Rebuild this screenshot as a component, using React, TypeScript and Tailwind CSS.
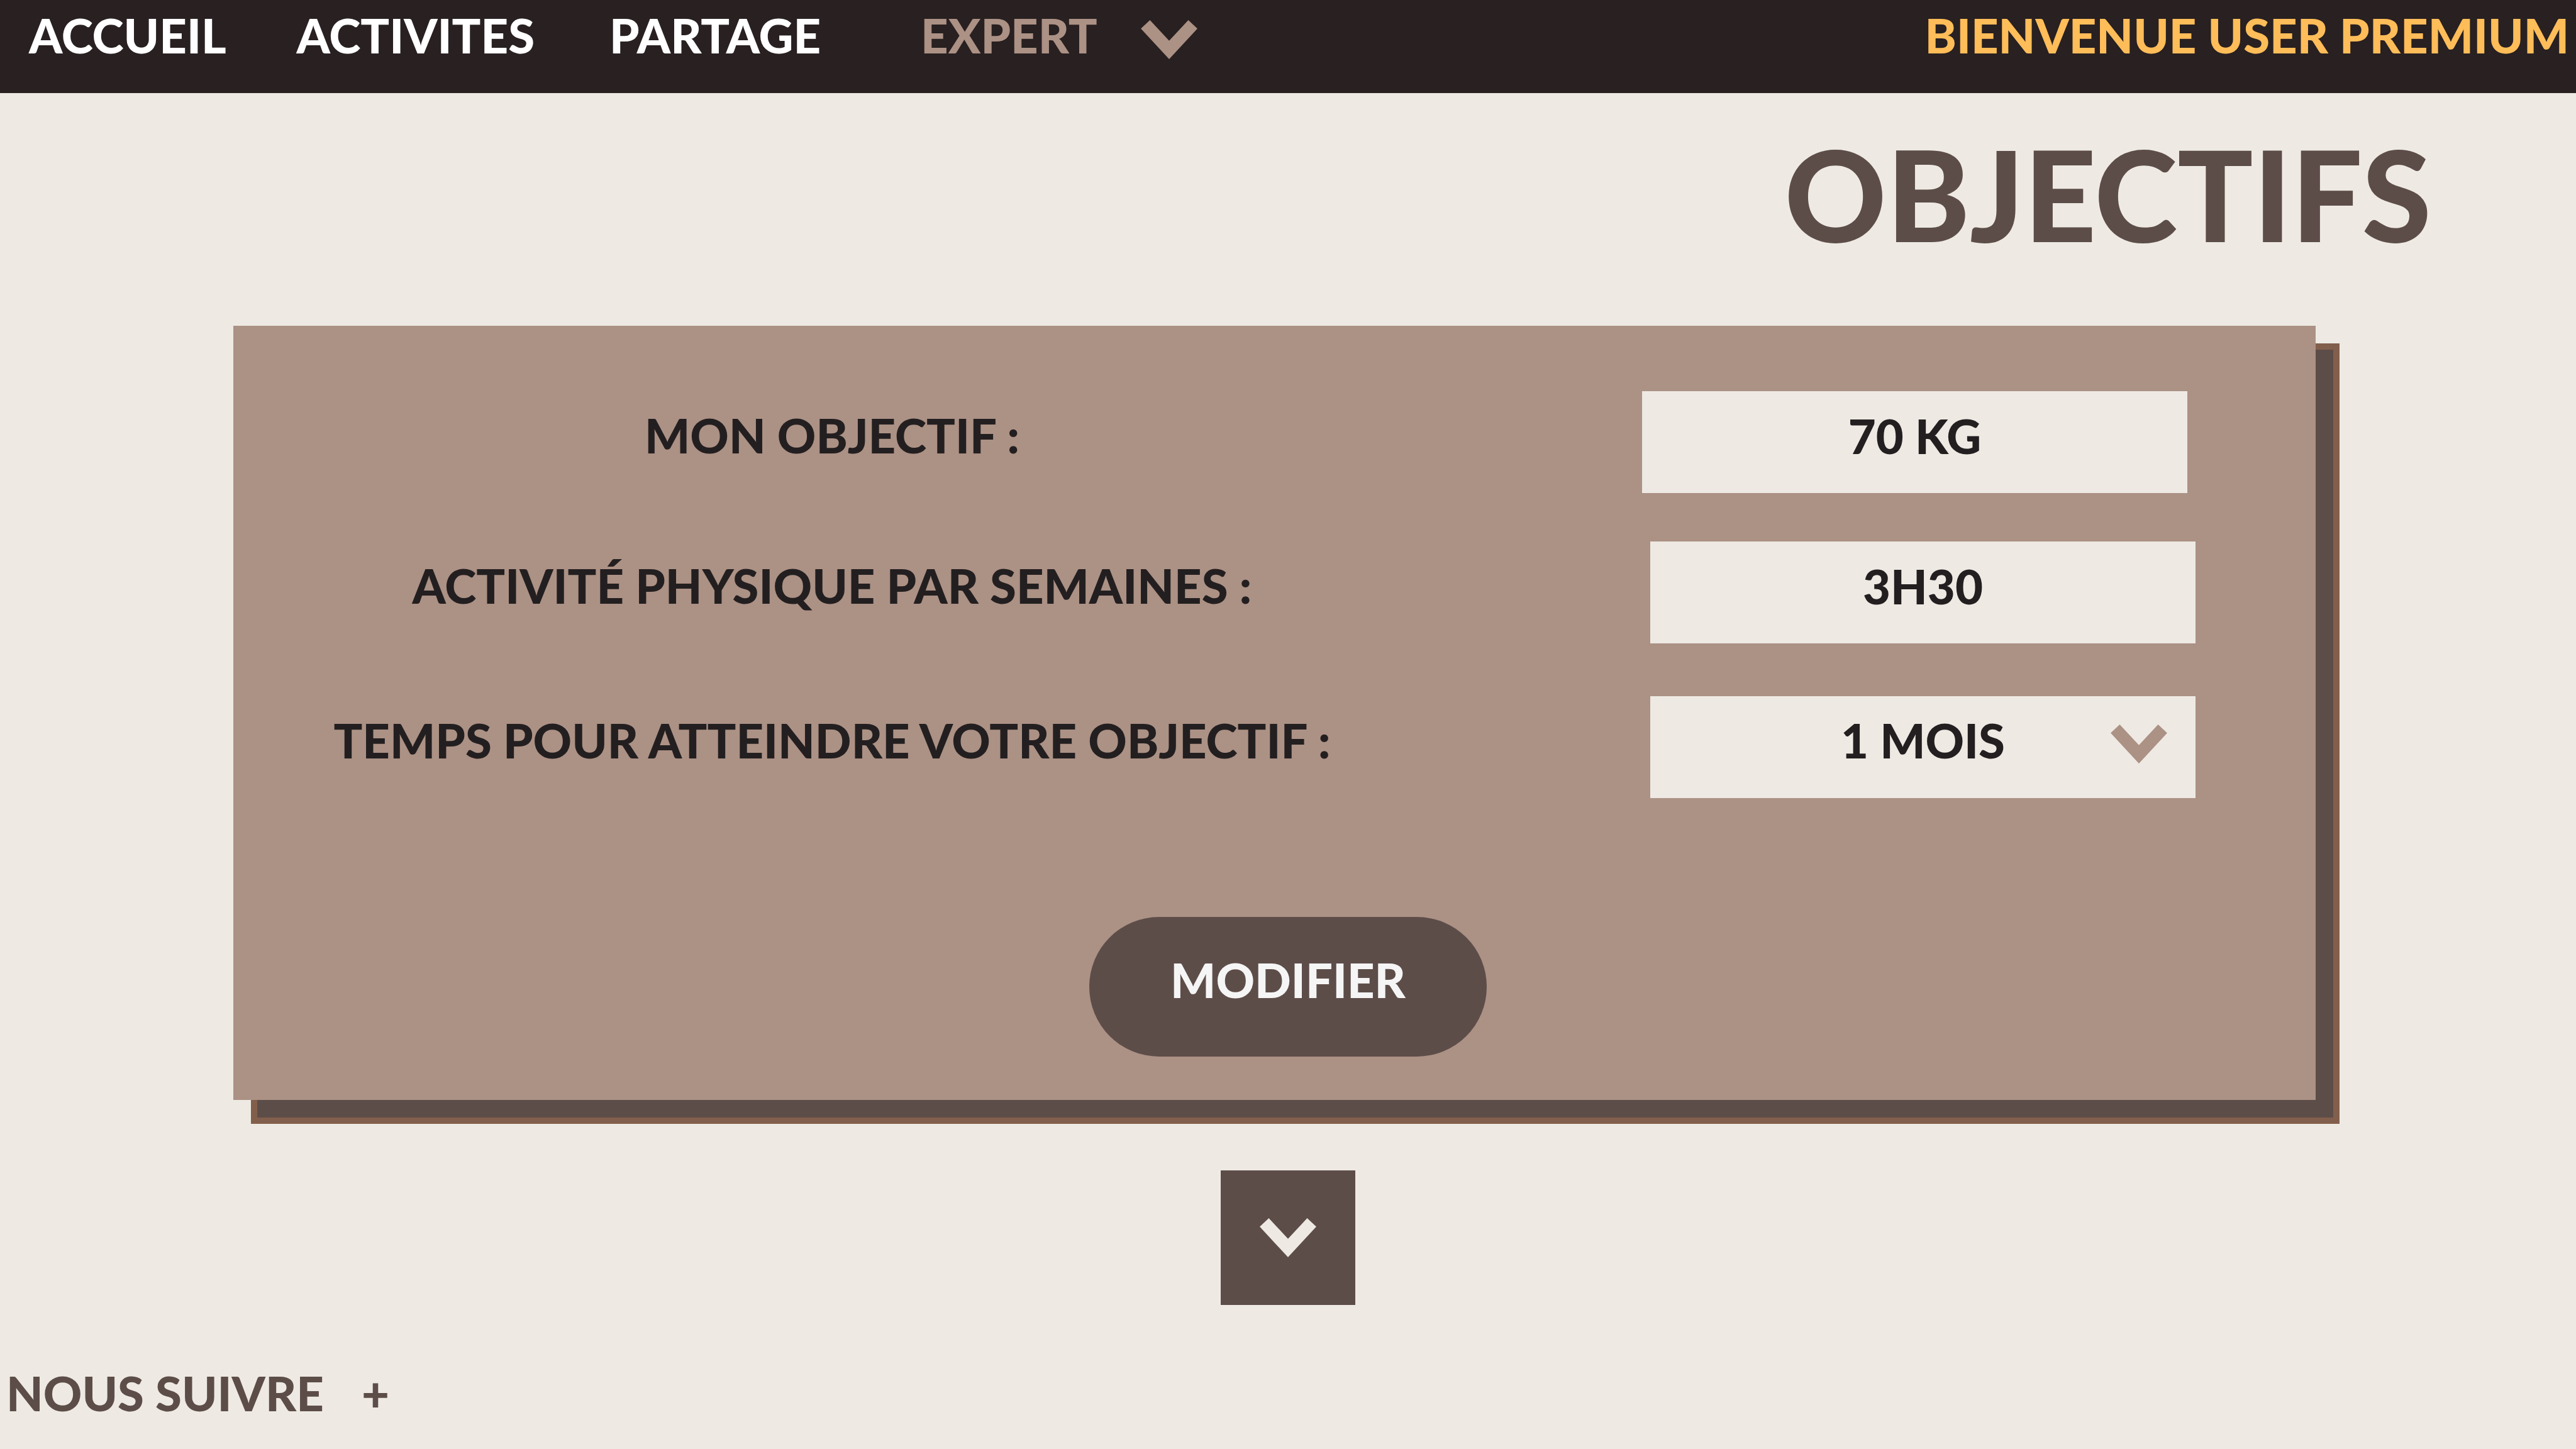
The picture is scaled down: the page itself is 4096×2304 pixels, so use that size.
import type { ReactNode } from "react";

function Chevron({ className = "" }: { className?: string }) {
  return (
    <svg viewBox="0 0 187 129" className={`h-[62px] w-[90px] shrink-0 ${className}`} fill="currentColor" aria-hidden="true">
      <path d="M0 28 30 0 93.5 68 157 0 187 28 93.5 129Z" />
    </svg>
  );
}

function Row({ id, label, className, children }: { id: string; label: string; className: string; children: ReactNode }) {
  return (
    <div className={`flex h-[162px] items-center ${className}`}>
      <label htmlFor={id} className="w-[1904px] pb-[22px] text-center whitespace-nowrap">
        {label}
      </label>
      <div className="relative ml-auto h-full w-[867px]">{children}</div>
    </div>
  );
}

const field = "block h-full w-full appearance-none rounded-none bg-[#eeeae3] p-0 pb-[22px] text-center font-black outline-none";

export default function App() {
  return (
    <div className="flex min-h-screen flex-col bg-[#eeeae3] font-['Lato',sans-serif] text-[76px] leading-[96px] font-black text-[#231f20]">
      <header className="flex h-[148px] items-center bg-[#282021] pr-[11px] pb-[36px] pl-[46px] whitespace-nowrap text-white">
        <nav className="flex items-center">
          <a href="#accueil">ACCUEIL</a>
          <a href="#activites" className="ml-[112px]">ACTIVITES</a>
          <a href="#partage" className="ml-[119px]">PARTAGE</a>
          <button type="button" className="ml-[159px] flex items-center gap-[69px] text-[#ac9185]">
            EXPERT
            <Chevron className="mt-[14px]" />
          </button>
        </nav>
        <p className="ml-auto text-[#ffbd59]">BIENVENUE USER PREMIUM</p>
      </header>

      <main className="flex flex-col">
        <h1 className="mt-[40px] mb-[90px] pr-[230px] text-right text-[200px] leading-[240px] text-[#5d4d49]">OBJECTIFS</h1>

        <section className="relative mr-[414px] ml-[371px]">
          <div className="absolute top-[28px] -right-[38px] -bottom-[38px] left-[28px] border-[10px] border-[#825f4c] bg-[#5d4d49]" />
          <form className="relative bg-[#ac9185] pt-[104px] pb-[69px]" onSubmit={(e) => e.preventDefault()}>
            <Row id="objectif" label="MON OBJECTIF :" className="pr-[204px]">
              <input id="objectif" type="text" defaultValue="70 KG" className={field} />
            </Row>
            <Row id="activite" label="ACTIVITÉ PHYSIQUE PAR SEMAINES :" className="mt-[77px] pr-[191px]">
              <input id="activite" type="text" defaultValue="3H30" className={field} />
            </Row>
            <Row id="temps" label="TEMPS POUR ATTEINDRE VOTRE OBJECTIF :" className="mt-[84px] pr-[191px]">
              <select id="temps" defaultValue="1" className={field}>
                <option value="1">1 MOIS</option>
                <option value="2">2 MOIS</option>
                <option value="3">3 MOIS</option>
              </select>
              <Chevron className="pointer-events-none absolute top-[45px] right-[45px] text-[#ac9185]" />
            </Row>
            <div className="mt-[189px] flex justify-center pl-[43px]">
              <button type="submit" className="h-[222px] w-[632px] rounded-full bg-[#5d4d49] pb-[22px] text-[#f5f5f5]">
                MODIFIER
              </button>
            </div>
          </form>
        </section>

        <button type="button" aria-label="Suite" className="mt-[112px] flex size-[214px] items-center justify-center self-center bg-[#5d4d49] text-[#eeeae3]">
          <Chevron />
        </button>
      </main>

      <footer className="mt-auto flex pb-[41px] pl-[10px] text-[#5d4d49]">
        <button type="button" className="flex gap-[60px]">
          <span>NOUS SUIVRE</span>
          <span>+</span>
        </button>
      </footer>
    </div>
  );
}
